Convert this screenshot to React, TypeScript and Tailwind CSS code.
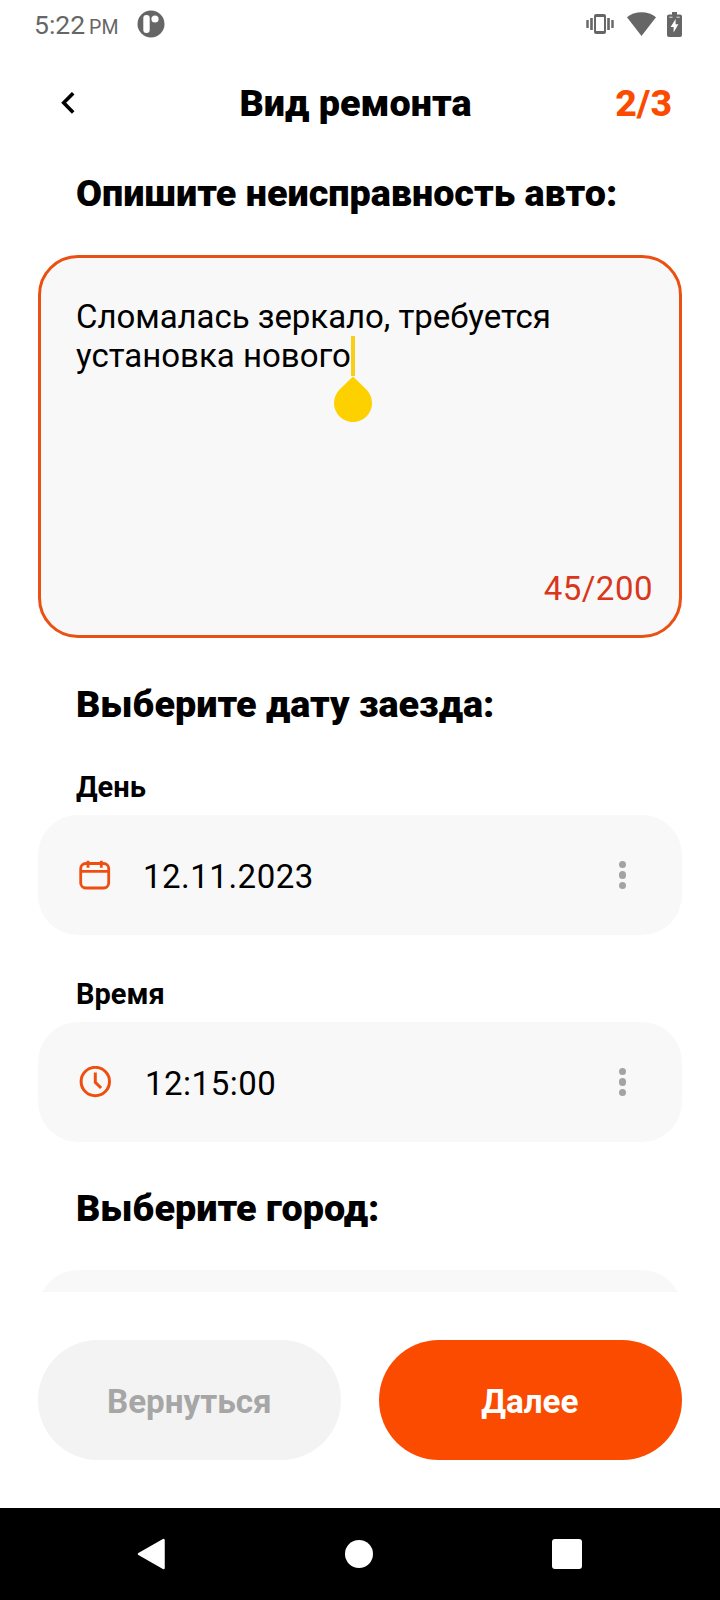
import type { ReactNode } from "react";

function StatusBar() {
  return (
    <div className="flex h-[50px] items-center pl-[34px] pr-[38px] text-[#666666]">
      <div className="flex items-baseline gap-[4px]">
        <span className="text-[26.500px] leading-[50px]">5:22</span>
        <span className="text-[19.500px] leading-[26px]">PM</span>
      </div>
      <svg className="-mt-[3px] ml-[19px]" width="28" height="28" viewBox="0 0 28 28">
        <circle cx="14" cy="14" r="13.5" fill="#666666" />
        <rect x="6.3" y="5" width="6.4" height="18" rx="3" fill="#fff" />
        <circle cx="18" cy="9" r="3.6" fill="#fff" />
      </svg>
      <div className="-mt-[2px] ml-auto flex items-center">
        <svg width="28" height="20" viewBox="0 0 28 20" fill="#666666">
          <path d="M10 0h8a2 2 0 0 1 2 2v16a2 2 0 0 1-2 2h-8a2 2 0 0 1-2-2V2a2 2 0 0 1 2-2zm0 3v14h8V3z" fillRule="evenodd" />
          <rect x="0.3" y="6" width="2.4" height="8" />
          <rect x="4.2" y="4" width="2.6" height="12" />
          <rect x="21.2" y="4" width="2.6" height="12" />
          <rect x="25.3" y="6" width="2.4" height="8" />
        </svg>
        <svg className="ml-[13px]" width="29" height="24" viewBox="0 0 29 24" fill="#666666">
          <path d="M14.5 24 0 5.2C4 2 9 0.2 14.5 0.2S25 2 29 5.2z" />
        </svg>
        <svg className="ml-[11px]" width="15" height="25" viewBox="0 0 15 25">
          <path d="M5 0h5v2.4h3a2 2 0 0 1 2 2V23a2 2 0 0 1-2 2H2a2 2 0 0 1-2-2V4.400a2 2 0 0 1 2-2h3z" fill="#666666" />
          <path d="M8.600 7v5.300h2.800L6.600 20.500v-5.600H3.600z" fill="#fff" />
          <path d="M2.300 5.200h3.200M9.500 5.200h3.200" stroke="#fff" strokeWidth="0.800" />
        </svg>
      </div>
    </div>
  );
}

function Header() {
  return (
    <header className="grid h-[106px] grid-cols-[1fr_auto_1fr] items-center pl-[61px] pr-[48px] text-[37.500px] leading-[44px]">
      <svg width="14" height="22" viewBox="0 0 14 22" fill="none">
        <path d="M12.200 1.200 2.700 10.800l9.500 9.600" stroke="#000" strokeWidth="3.600" />
      </svg>
      <h1 className="-ml-[22px] text-[37.750px] font-black">Вид ремонта</h1>
      <span className="text-right font-extrabold text-[#fa4b00]">2/3</span>
    </header>
  );
}

function SectionTitle({ children }: { children: ReactNode }) {
  return <h2 className="pl-[38px] text-[37.750px] font-black leading-[44px]">{children}</h2>;
}

function Field({ icon, value }: { icon: ReactNode; value: string }) {
  return (
    <div className="mt-[11px] flex h-[120px] items-center rounded-[40px] bg-[#f8f8f8] pl-[41px] pr-[56px]">
      {icon}
      <span className="pt-[3px] text-[33px] leading-[40px] tracking-[0.500px]">{value}</span>
      <div className="ml-auto flex flex-col gap-[3px]">
        <i className="size-[7.500px] rounded-full bg-[#a3a3a3]" />
        <i className="size-[7.500px] rounded-full bg-[#a3a3a3]" />
        <i className="size-[7.500px] rounded-full bg-[#a3a3a3]" />
      </div>
    </div>
  );
}

export default function App() {
  return (
    <div className="flex h-[1600px] w-[720px] flex-col overflow-hidden bg-white font-['Roboto',sans-serif] text-black">
      <StatusBar />
      <Header />
      <main className="flex h-[1136px] flex-col overflow-hidden px-[38px] pt-[15px]">
        <SectionTitle>Опишите неисправность авто:</SectionTitle>
        <div className="mt-[40px] flex h-[383px] shrink-0 flex-col justify-between rounded-[40px] border-[3px] border-[#ea5011] bg-[#f8f8f8] pb-[26px] pl-[35px] pr-[26px] pt-[39px]">
          <p className="text-[33px] leading-[39px]">
            <span className="tracking-[-0.050px]">Сломалась зеркало, требуется</span>
            <br />
            установка нового
            <span className="relative">
              <i className="absolute left-0 top-0 h-[40px] w-[4px] bg-[#f8cf16]" />
              <svg className="absolute -left-[17px] top-[40px]" width="38" height="46" viewBox="0 0 38 46">
                <path d="M19 0.500 32.400 13.600A19 19 0 1 1 5.600 13.600z" fill="#fdd000" />
              </svg>
            </span>
          </p>
          <span className="text-right text-[33px] leading-[40px] tracking-[0.500px] text-[#d9361b]">45/200</span>
        </div>
        <div className="mt-[44px]">
          <SectionTitle>Выберите дату заезда:</SectionTitle>
        </div>
        <div className="mt-[44px]">
          <label className="block pl-[38px] text-[29px] font-bold leading-[34px]">День</label>
          <Field
            value="12.11.2023"
            icon={
              <svg className="mr-[32px]" width="32" height="30" viewBox="0 0 32 30" fill="none" stroke="#ee4f10" strokeWidth="2.800">
                <rect x="1.700" y="3.500" width="28" height="24.500" rx="5" />
                <path d="M2 11.300h27.500M9 0.800v7M22.300 0.800v7" />
              </svg>
            }
          />
        </div>
        <div className="mt-[42px]">
          <label className="block pl-[38px] text-[29px] font-bold leading-[34px]">Время</label>
          <Field
            value="12:15:00"
            icon={
              <svg className="mr-[34px]" width="32" height="32" viewBox="0 0 32 32" fill="none" stroke="#ee4f10" strokeWidth="3">
                <circle cx="16.300" cy="15.500" r="14.200" />
                <path d="M16.300 6.500v9.800l5.800 5.700" />
              </svg>
            }
          />
        </div>
        <div className="mt-[44px]">
          <SectionTitle>Выберите город:</SectionTitle>
        </div>
        <div className="mt-[40px] h-[120px] shrink-0 rounded-[40px] bg-[#f8f8f8]" />
      </main>
      <footer className="flex h-[216px] gap-[38px] px-[38px] pt-[48px] text-[33.200px] font-bold">
        <button className="h-[120px] flex-1 rounded-full bg-[#f3f3f3] pt-[3px] text-[#a6a6a6]">Вернуться</button>
        <button className="h-[120px] flex-1 rounded-full bg-[#fa4b00] pr-[1px] pt-[3px] text-white">Далее</button>
      </footer>
      <nav className="flex h-[92px] items-center bg-black pl-[137px]">
        <svg width="28" height="32" viewBox="0 0 28 32">
          <path d="M2 16 26.500 2v28z" fill="#fff" stroke="#fff" strokeWidth="2.500" strokeLinejoin="round" />
        </svg>
        <i className="ml-[180px] size-[28px] rounded-full bg-white" />
        <i className="ml-[179px] size-[30px] rounded-[3px] bg-white" />
      </nav>
    </div>
  );
}
